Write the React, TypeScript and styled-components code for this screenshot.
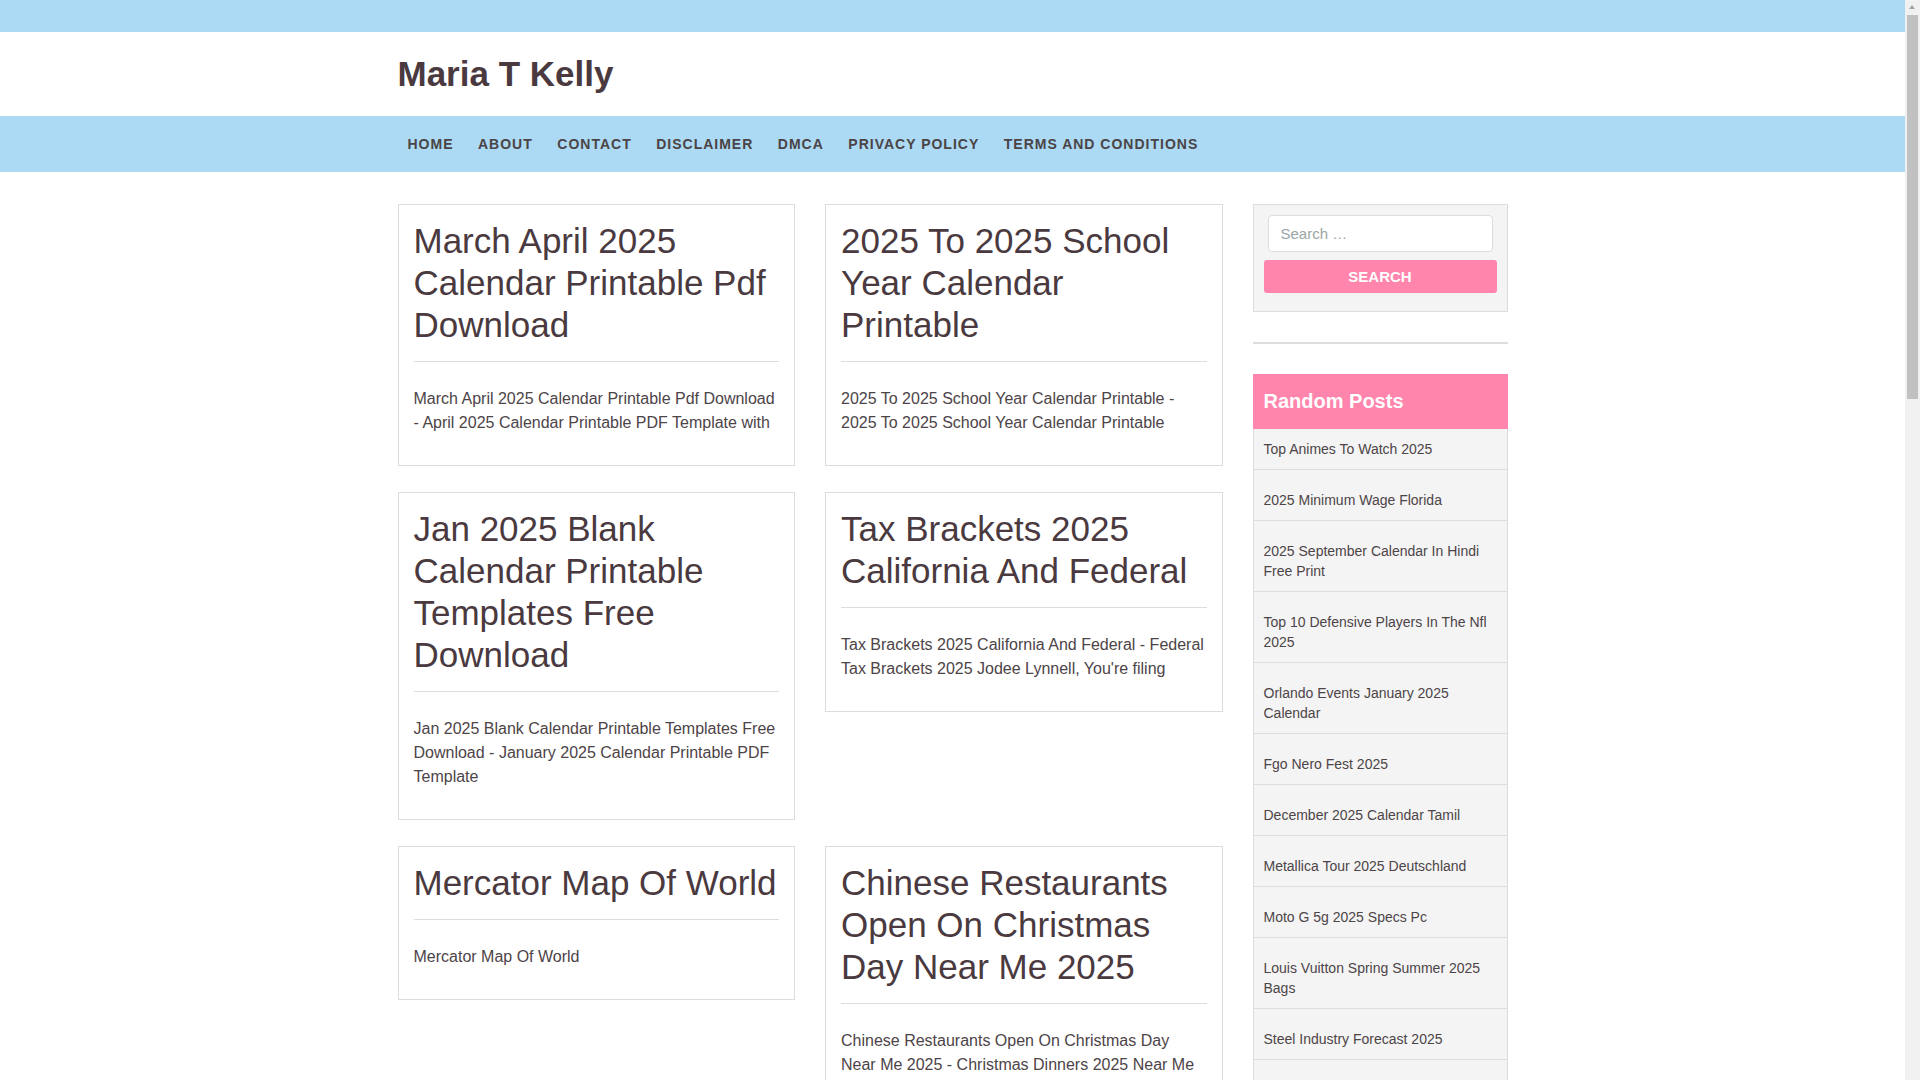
import React from "react";
import styled, { createGlobalStyle } from "styled-components";

const GlobalStyle = createGlobalStyle`
  html, body {
    margin: 0;
    padding: 0;
    background: #fff;
  }
  body {
    margin-right: 15px;
    font-family: "Liberation Sans", Arial, sans-serif;
    color: #4a3f44;
  }
  * {
    box-sizing: border-box;
  }
`;

// page scrollbar as it shows in the screenshot (the headless browser hides the real one)
const ScrollTrack = styled.div`
  position: fixed;
  top: 0;
  right: 0;
  width: 15px;
  height: 100vh;
  background: #f1f1f1;
`;

const ScrollArrow = styled.div`
  position: absolute;
  top: 5px;
  left: 4px;
  width: 0;
  height: 0;
  border-left: 3.5px solid transparent;
  border-right: 3.5px solid transparent;
  border-bottom: 4px solid #a3a3a3;
`;

const ScrollThumb = styled.div`
  position: absolute;
  top: 15px;
  left: 2px;
  width: 11px;
  height: 384px;
  background: #c1c1c1;
`;

const TopBar = styled.div`
  height: 32px;
  background: #acd9f3;
`;

const Container = styled.div`
  width: 1110px;
  margin: 0 auto;
`;

const Header = styled.header`
  height: 84px;
  background: #fff;
`;

const SiteTitle = styled.h1`
  margin: 0;
  font-size: 35px;
  line-height: 84px;
  font-weight: 700;
  color: #4a3a40;
`;

const NavBar = styled.nav`
  height: 56px;
  background: #acd9f3;
`;

const NavList = styled.ul`
  display: flex;
  align-items: center;
  height: 56px;
  margin: 0;
  padding: 0;
  list-style: none;
`;

const NavLink = styled.a`
  display: block;
  padding: 0 14.5px 0 10px;
  font-size: 14px;
  font-weight: 700;
  letter-spacing: 1px;
  text-transform: uppercase;
  color: #4a4446;
  text-decoration: none;
  line-height: 56px;
`;

const Layout = styled(Container)`
  display: flex;
  align-items: flex-start;
  gap: 30px;
  padding-top: 32px;
`;

const Content = styled.main`
  flex: 0 0 825px;
  display: grid;
  grid-template-columns: 1fr 1fr;
  column-gap: 30px;
  row-gap: 26px;
  align-items: start;
`;

const Card = styled.article`
  border: 1px solid #ddd;
  padding: 15px;
  background: #fff;
`;

const CardTitle = styled.h2`
  margin: 0;
  padding-bottom: 15px;
  border-bottom: 1px solid #ddd;
  font-size: 35px;
  line-height: 42px;
  font-weight: 400;
  color: #4a3a40;
`;

const Excerpt = styled.p`
  margin: 25px 0 15px;
  font-size: 16px;
  line-height: 24px;
  color: #4d4448;
`;

const Sidebar = styled.aside`
  flex: 0 0 255px;
`;

const SearchWidget = styled.form`
  background: #f4f4f4;
  border: 1px solid #ddd;
  padding: 10px 10px 18px;
`;

const SearchInput = styled.input`
  display: block;
  width: calc(100% - 8px);
  height: 37px;
  margin: 0 auto 8px;
  padding: 0 12px;
  border: 1px solid #ddd;
  border-radius: 4px;
  background: #fff;
  font-family: "Liberation Sans", Arial, sans-serif;
  font-size: 15px;
  color: #555;
  &::placeholder {
    color: #9aa6a6;
  }
`;

const SearchButton = styled.button`
  display: block;
  width: 100%;
  height: 33px;
  border: none;
  border-radius: 3px;
  background: #ff85ad;
  color: #fff;
  font-family: "Liberation Sans", Arial, sans-serif;
  font-size: 15px;
  font-weight: 700;
  text-transform: uppercase;
`;

const WidgetRule = styled.hr`
  margin: 30px 0;
  border: none;
  border-top: 2px solid #ddd;
`;

const PostsWidget = styled.section`
  background: #f4f4f4;
  border: 1px solid #ddd;
  border-top: none;
`;

const WidgetTitle = styled.h3`
  margin: 0 -1px;
  height: 55px;
  padding: 0 11px;
  background: #ff85ad;
  color: #fff;
  font-size: 20px;
  font-weight: 700;
  line-height: 55px;
`;

const PostList = styled.ul`
  margin: 0;
  padding: 0;
  list-style: none;
`;

const PostItem = styled.li`
  padding: 20px 10px 10px;
  border-bottom: 1px solid #ddd;
  font-size: 14px;
  line-height: 20px;
  &:first-child {
    padding-top: 10px;
  }
  a {
    color: #4d4448;
    text-decoration: none;
  }
`;

const navItems = [
  "Home",
  "About",
  "Contact",
  "Disclaimer",
  "DMCA",
  "Privacy Policy",
  "Terms and Conditions",
];

const posts = [
  {
    title: "March April 2025 Calendar Printable Pdf Download",
    excerpt:
      "March April 2025 Calendar Printable Pdf Download - April 2025 Calendar Printable PDF Template with",
  },
  {
    title: "2025 To 2025 School Year Calendar Printable",
    excerpt:
      "2025 To 2025 School Year Calendar Printable - 2025 To 2025 School Year Calendar Printable",
  },
  {
    title: "Jan 2025 Blank Calendar Printable Templates Free Download",
    excerpt:
      "Jan 2025 Blank Calendar Printable Templates Free Download - January 2025 Calendar Printable PDF Template",
  },
  {
    title: "Tax Brackets 2025 California And Federal",
    excerpt:
      "Tax Brackets 2025 California And Federal - Federal Tax Brackets 2025 Jodee Lynnell, You're filing",
  },
  {
    title: "Mercator Map Of World",
    excerpt: "Mercator Map Of World",
  },
  {
    title: "Chinese Restaurants Open On Christmas Day Near Me 2025",
    excerpt:
      "Chinese Restaurants Open On Christmas Day Near Me 2025 - Christmas Dinners 2025 Near Me",
  },
  {
    title: "Best Budget Phones 2025 Under 300",
    excerpt: "Best Budget Phones 2025 Under 300 - Top Picks For 2025",
  },
  {
    title: "Printable 2025 Yearly Calendar With Holidays",
    excerpt:
      "Printable 2025 Yearly Calendar With Holidays - Free Yearly Calendar 2025 Templates",
  },
];

const randomPosts = [
  "Top Animes To Watch 2025",
  "2025 Minimum Wage Florida",
  "2025 September Calendar In Hindi Free Print",
  "Top 10 Defensive Players In The Nfl 2025",
  "Orlando Events January 2025 Calendar",
  "Fgo Nero Fest 2025",
  "December 2025 Calendar Tamil",
  "Metallica Tour 2025 Deutschland",
  "Moto G 5g 2025 Specs Pc",
  "Louis Vuitton Spring Summer 2025 Bags",
  "Steel Industry Forecast 2025",
  "Nfl Draft 2025 Mock Draft",
  "Easter 2025 Date Uk",
];

const App = () => {
  return (
    <>
      <GlobalStyle />
      <TopBar />
      <Header>
        <Container>
          <SiteTitle>Maria T Kelly</SiteTitle>
        </Container>
      </Header>
      <NavBar>
        <Container>
          <NavList>
            {navItems.map((item) => (
              <li key={item}>
                <NavLink href="#">{item}</NavLink>
              </li>
            ))}
          </NavList>
        </Container>
      </NavBar>

      <Layout>
        <Content>
          {posts.map((post) => (
            <Card key={post.title}>
              <CardTitle>{post.title}</CardTitle>
              <Excerpt>{post.excerpt}</Excerpt>
            </Card>
          ))}
        </Content>

        <Sidebar>
          <SearchWidget onSubmit={(e) => e.preventDefault()}>
            <SearchInput type="search" placeholder="Search …" />
            <SearchButton type="submit">Search</SearchButton>
          </SearchWidget>
          <WidgetRule />
          <PostsWidget>
            <WidgetTitle>Random Posts</WidgetTitle>
            <PostList>
              {randomPosts.map((title) => (
                <PostItem key={title}>
                  <a href="#">{title}</a>
                </PostItem>
              ))}
            </PostList>
          </PostsWidget>
        </Sidebar>
      </Layout>

      <ScrollTrack>
        <ScrollArrow />
        <ScrollThumb />
      </ScrollTrack>
    </>
  );
};

export default App;
